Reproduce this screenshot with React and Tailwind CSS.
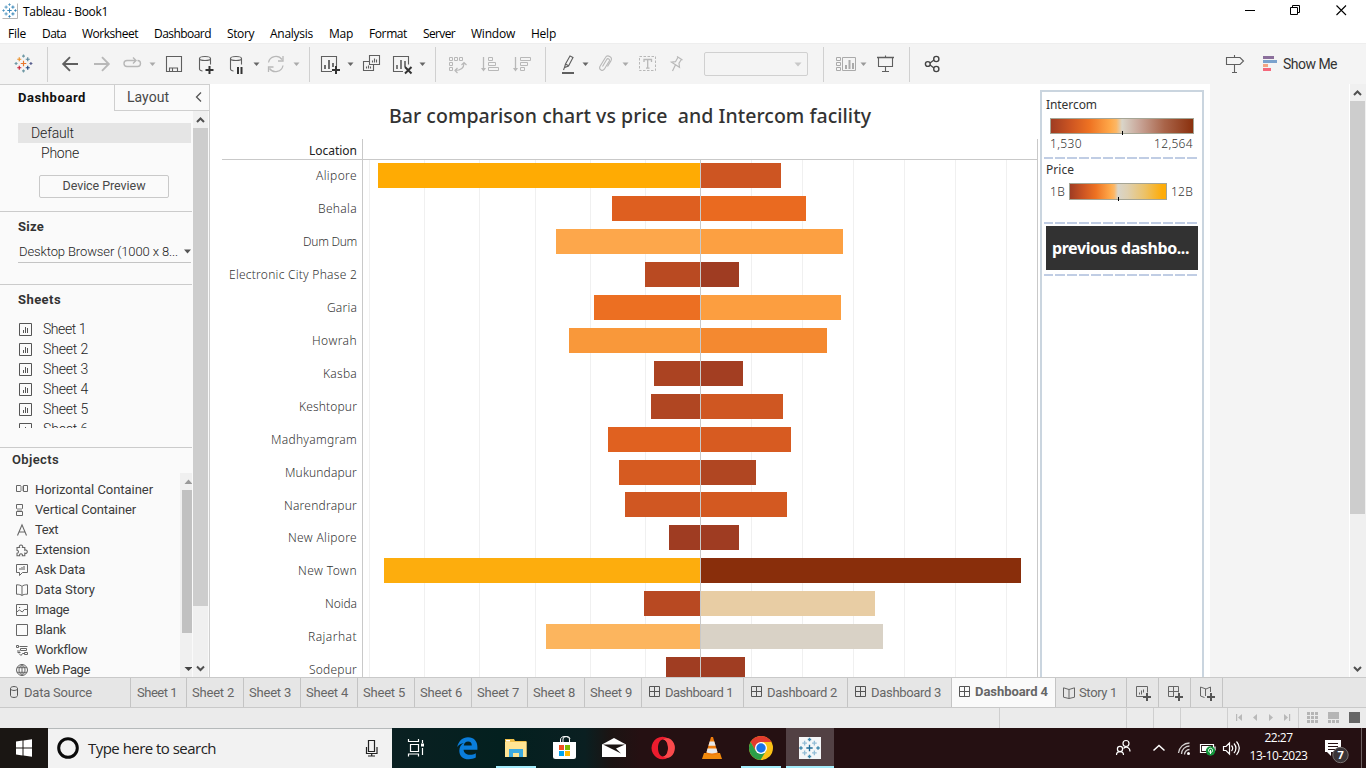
import { useLayoutEffect, useRef, useState } from "react";

/* Single line of text whose letter spacing is computed to fill a given width. */
function T({ w, className = "", children }) {
  const ref = useRef(null);
  const [ls, setLs] = useState(0);
  useLayoutEffect(() => {
    const natural = ref.current.getBoundingClientRect().width;
    setLs((w - natural) / children.length);
  }, [w, children]);
  return (
    <span className={"block shrink-0 whitespace-pre " + className} style={{ width: w }}>
      <span ref={ref} className="inline-block" style={{ letterSpacing: ls }}>{children}</span>
    </span>
  );
}

/* Drawing strip: its user space starts at (x, y) of the window. */
function G({ x, y = 43, w, h = 41, className = "", children }) {
  return (
    <svg width={w} height={h} viewBox={`${x} ${y} ${w} ${h}`} fill="none" className={"shrink-0 " + className}>
      {children}
    </svg>
  );
}

const Caret = ({ x, y = 64, c = "#666" }) => <path d={`M${x - 3} ${y - 1.5}h6l-3 3.5z`} fill={c} />;

function Plus({ x, y, r, c, sw = 1 }) {
  return <path d={`M${x - r} ${y}h${2 * r}M${x} ${y - r}v${2 * r}`} stroke={c} strokeWidth={sw} />;
}

function Crosses({ x, y, s = 1, colors }) {
  const pts = [
    [0, 0, 2.6], [0, -7, 1.4], [0, 7, 1.4], [-7, 0, 1.4], [7, 0, 1.4],
    [-4, -4, 1.9], [4, -4, 1.9], [-4, 4, 1.9], [4, 4, 1.9],
  ];
  return pts.map(([dx, dy, r], i) => (
    <Plus key={i} x={x + dx * s} y={y + dy * s} r={r * s} c={colors[i % colors.length]} sw={1.1 * s} />
  ));
}

const menus = [
  ["File", 18], ["Data", 24], ["Worksheet", 56], ["Dashboard", 57], ["Story", 27], ["Analysis", 43],
  ["Map", 24], ["Format", 38], ["Server", 32], ["Window", 44], ["Help", 25],
];

function TitleBar() {
  return (
    <div className="flex h-[23px] shrink-0 bg-white text-[12px] leading-[23px] text-black">
      <G x={0} y={0} w={23} h={23}>
        <path d="M2.5 18.500h15v-15" stroke="#b5b5b5" />
        <Crosses x={9.5} y={10.5} s={0.85} colors={["#2e7fb5", "#4d94c0"]} />
      </G>
      <T w={85}>Tableau - Book1</T>
      <div className="flex-1" />
      <G x={1230} y={0} w={136} h={23}>
        <path d="M1245 10.500h10" stroke="#000" />
        <path d="M1290.500 7.500h7v7h-7zM1292.500 7.500v-2h7v7h-2" stroke="#000" />
        <path d="M1336.500 5.500l9.500 9.500m0-9.500l-9.500 9.500" stroke="#000" strokeWidth="1.1" />
      </G>
    </div>
  );
}

const L = "#b8b8b8";
const D = "#5f5f5f";

function Toolbar() {
  return (
    <div className="flex h-[41px] shrink-0 border-t border-[#eeeeee] bg-[#f4f4f4] [&>svg]:-mt-px">
      <G x={0} w={48}>
        <Crosses x={23.5} y={63.5} s={1.06} colors={["#e8762d", "#7099a5", "#7099a5", "#7099a5", "#59608f", "#eb912b", "#59879b", "#c72035", "#1f457e"]} />
        <path d="M47.500 47v35" stroke="#d0d0d0" />
      </G>
      <G x={48} w={69}>
        <path d="M78 64H63.500M70 57.200L63.200 64l6.800 6.800" stroke={D} strokeWidth="1.9" />
        <path d="M94 64h14.500M102 57.200l6.800 6.800-6.800 6.800" stroke={L} strokeWidth="1.9" />
      </G>
      <G x={117} w={43}>
        <path d="M135.500 60.500h-8.500a3 3 0 0 0 0 6h10.500a3 3 0 0 0 0-6M133 57.500l3 3-3 3" stroke={L} strokeWidth="1.4" />
        <Caret x={152.500} c="#aaa" />
      </G>
      <G x={160} w={30}>
        <path d="M166.500 56.500h15v15h-15zM169.500 71v-3h8v3M172.500 71v-2.500" stroke={D} strokeWidth="1.1" />
      </G>
      <G x={190} w={73}>
        {[0, 31].map((d) => (
          <path key={d} d={`M${199.500 + d} 58.500v10.500c0 1 1.500 2 3 2M${210.500 + d} 58.500v6M${199.500 + d} 58.500a5.500 2 0 1 0 11 0a5.500 2 0 1 0 -11 0`} stroke={D} strokeWidth="1.1" />
        ))}
        <Plus x={209.500} y={70} r={4} c="#333" sw={2} />
        <path d="M238 67v7M241.500 67v7" stroke="#333" strokeWidth="2" />
        <Caret x={256.500} />
      </G>
      <G x={263} w={47}>
        <path d="M268.500 62.500a7.500 7.500 0 0 1 13.500-3M283 65.500a7.500 7.500 0 0 1-13.500 3M283 56v5h-5M268.500 72v-5h5" stroke={L} strokeWidth="1.3" />
        <Caret x={296.500} c="#aaa" />
        <path d="M309.500 47v35" stroke="#d0d0d0" />
      </G>
      <G x={310} w={48}>
        <path d="M332 71.500h-10.500v-15h15v9.500" stroke={D} strokeWidth="1.1" />
        <path d="M325 69v-4M329 69v-9M333 67v-4" stroke={D} strokeWidth="1.8" />
        <Plus x={336} y={70} r={4} c="#333" sw={2} />
        <Caret x={350.500} />
      </G>
      <G x={358} w={30}>
        <path d="M369.500 55.500h10v9h-10zM369 61.500h-5.500v9h10v-5.500M372.500 62.500v-2M374.500 62.500v-4M376.500 62.500v-3M366.500 68.500v-2M368.500 68.500v-3M370.500 68.500v-2" stroke={D} strokeWidth="1.1" />
      </G>
      <G x={388} w={48}>
        <path d="M403 71.500h-9.500v-15h15v8" stroke={D} strokeWidth="1.1" />
        <path d="M397 69v-4M401 69v-9M405 67v-6" stroke={D} strokeWidth="1.6" />
        <path d="M405 67l6.500 6.500m0-6.500l-6.500 6.500" stroke="#333" strokeWidth="2" />
        <Caret x={422.500} />
        <path d="M435.500 47v35" stroke="#d0d0d0" />
      </G>
      <G x={436} w={37}>
        <path d="M449.500 57.500h3v3h-3zM454.500 57.500h3v3h-3zM459.500 57.500h3v3h-3zM449.500 62.500h3v3h-3zM449.500 67.500h3v3h-3z" stroke={L} />
        <path d="M455 70.500c5 0 9-2 9-7.500M461.500 65l2.500-2.500 2.500 2.500M457.500 68l-2.500 2.500 2.500 2.500" stroke={L} strokeWidth="1.2" />
      </G>
      <G x={473} w={32}>
        <path d="M483.500 57v13" stroke={L} strokeWidth="1.3" />
        <path d="M481 68h5l-2.500 3.500z" fill={L} />
        <path d="M488.500 57.500h4v3h-4zM488.500 62.500h7v3h-7zM488.500 67.500h10v3h-10z" stroke={L} />
      </G>
      <G x={505} w={41}>
        <path d="M515.500 57v13" stroke={L} strokeWidth="1.3" />
        <path d="M513 68h5l-2.500 3.500z" fill={L} />
        <path d="M520.500 57.500h10v3h-10zM520.500 62.500h7v3h-7zM520.500 67.500h4v3h-4z" stroke={L} />
        <path d="M545.500 47v35" stroke="#d0d0d0" />
      </G>
      <G x={546} w={47}>
        <path d="M562 73h12" stroke={D} strokeWidth="2" />
        <path d="M564.500 67.500l1-3.500 4.500-8 3 1.500-4.500 8.500zM563.500 70l1-2.500M565.500 64l3 1.800" stroke={D} strokeWidth="1.1" />
        <Caret x={585.500} />
      </G>
      <G x={593} w={41}>
        <path d="M602.500 66.500l4.200-7a1.500 1.500 0 0 1 2.600 1.500l-5 8.200a2.600 2.600 0 0 1-4.500-2.500l5.500-9a3.200 3.200 0 0 1 5.600 3.200l-3.400 5.600" stroke={L} strokeWidth="1.1" />
        <Caret x={625.500} c="#aaa" />
      </G>
      <G x={634} w={29}>
        <path d="M639.500 56.500h16v14h-16z" stroke={L} strokeDasharray="2.5 1.500" />
        <path d="M644 62v-2.500h7.500V62M647.700 59.500v8.500M646 68.200h3.500" stroke={L} strokeWidth="1.3" />
      </G>
      <G x={663} w={41}>
        <path d="M677 56.500l5.500 3.500M678 57.200l-2.500 4.500-4 .5 8 5 -.5-4 2.500-4M675.500 64.800l-3 6.200" stroke={L} strokeWidth="1.2" />
      </G>
      <div className="mt-[8px] flex h-[24px] w-[104px] shrink-0 items-center justify-end rounded-[2px] border border-[#d0d0d0] pr-[5px]">
        <svg width="8" height="5"><path d="M0.500 0.500h7L4 4.500z" fill="#c8c8c8" /></svg>
      </div>
      <G x={808} w={64}>
        <path d="M823.500 47v35" stroke="#d0d0d0" />
        <path d="M836.500 57.500h4v3h-4zM836.500 62.500h4v3h-4zM836.500 67.500h4v3h-4zM842.500 57.500h13v13h-13z" stroke="#aaa" />
        <path d="M846 69v-4M849.500 69v-9M853 69v-6" stroke="#aaa" strokeWidth="2" />
        <Caret x={863.500} c="#999" />
      </G>
      <G x={872} w={38}>
        <path d="M877 57.500h17" stroke={D} strokeWidth="1.500" />
        <path d="M878.500 58v8.500h14V58M885.500 55.500v2M885.500 66.500v5M882 71.500h7" stroke={D} strokeWidth="1.1" />
        <path d="M909.500 47v35" stroke="#d0d0d0" />
      </G>
      <G x={910} w={310}>
        <path d="M930 63l4-3M930 65l4 3" stroke="#444" strokeWidth="1.2" />
        <g stroke="#444" strokeWidth="1.400">
          <circle cx="927.800" cy="64" r="2.400" /><circle cx="936.300" cy="59" r="2.600" /><circle cx="936.300" cy="69" r="2.600" />
        </g>
      </G>
      <G x={1220} w={63}>
        <path d="M1226.500 57.500h13.500l3.500 3.500-3.500 3.500h-13.500zM1234.500 55v2.500M1234.500 64.500v7.500M1232 72.500h5" stroke={D} strokeWidth="1.1" />
        <path d="M1263 56h11v3h-11z" fill="#8b6f9b" />
        <path d="M1263 60h14v3h-14z" fill="#7ba2cd" />
        <path d="M1263 64h5v3h-5z" fill="#f3a583" />
        <path d="M1263 68h8v3h-8z" fill="#f5687b" />
      </G>
      <T w={54} className="font-[Roboto,sans-serif] text-[14px] leading-[40px] text-[#333]">Show Me</T>
    </div>
  );
}

function SheetIcon() {
  return (
    <svg width="13" height="13" fill="none" className="shrink-0">
      <path d="M.5.5h12v12H.5zM4.500 10V7M6.500 10V4M8.500 10V5" stroke="#555" />
    </svg>
  );
}

const S = "#666";
const objects = [
  ["Horizontal Container", 118, <><path d="M.5 1.500h4v6h-4zM7.500 1.500h4v6h-4z" stroke={S} /><path d="M4 2h3v5H4z" fill="#bbb" /></>],
  ["Vertical Container", 101, <><path d="M.5.5h6v4h-6zM.5 7.500h6v4h-6z" stroke={S} /><path d="M1 4h5v3H1z" fill="#bbb" /></>],
  ["Text", 23, <path d="M1.500 11.500L6 .8l4.500 10.700M3 8h6" stroke={S} strokeWidth="1.1" />],
  ["Extension", 55, <path d="M1 3.500h2.500a1.700 1.700 0 1 1 3 0h2.300v2.700a1.700 1.700 0 1 1 0 3v2.600H6.400a1.500 1.500 0 1 0-2.800 0H1V9.200a1.500 1.500 0 1 0 0-3z" stroke={S} strokeWidth="1.1" />],
  ["Ask Data", 50, <><path d="M.5.5h11v8H6.500l-3 3v-3h-3z" stroke={S} /><path d="M3 4h2v2H3zM5 3h2v3H5zM7 2h2v4H7z" fill="#aaa" /></>],
  ["Data Story", 60, <path d="M6 2.500C5 1.200 3 .8.5.8v9.400c2.500 0 4.500.3 5.500 1.300 1-1 3-1.300 5.500-1.300V.8C9 .8 7 1.200 6 2.500zv9" stroke={S} />],
  ["Image", 34, <path d="M.5.5h11v11H.5zM.8 8l2.500-2 3 2 2-2.500h3M3 3.500h1.200" stroke={S} />],
  ["Blank", 31, <path d="M.5.5h11v11H.5z" stroke={S} />],
  ["Workflow", 52, <path d="M.5 1.500h2v2h-2zM3.500 2.500h8M4.500 4.500h6v2h-6zM1 7h3M4.500 8.500H1.500M8.500 8.500h3v2h-3zM3 9.500l2 2 1.500-2H8" stroke={S} />],
  ["Web Page", 55, <><circle cx="6" cy="6" r="5.500" stroke={S} /><path d="M6 .5c-4 3-4 8 0 11M6 .5c4 3 4 8 0 11M1 3.700h10M1 8.300h10M6 .5v11" stroke={S} /></>],
];

function Sidebar() {
  return (
    <div className="flex w-[210px] shrink-0 flex-col border-r border-t border-[#cfcfcf] bg-[#fafafa] font-[Roboto,sans-serif] text-[#484848]">
      <div className="flex h-[26px] shrink-0">
        <div className="w-[114px] pl-[18px] text-[13px] font-bold leading-[25px] text-[#111]"><T w={68}>Dashboard</T></div>
        <div className="flex flex-1 border-b border-l border-[#cfcfcf] pl-[12px] text-[14px] leading-[25px]">
          <T w={42}>Layout</T>
          <svg width="38" height="24" fill="none"><path d="M32 7.500l-4.500 4.500 4.500 4.500" stroke="#555" strokeWidth="1.300" /></svg>
        </div>
      </div>
      <div className="flex min-h-0 flex-1">
        <div className="flex w-[192px] shrink-0 flex-col overflow-hidden">
          <div className="ml-[18px] mr-px mt-[12px] h-[20px] shrink-0 bg-[#e5e5e5] pl-[13px] text-[14px] font-light leading-[21px] text-[#222]"><T w={43}>Default</T></div>
          <div className="h-[20px] shrink-0 pl-[41px] text-[14px] font-light leading-[21px] text-[#222]"><T w={38}>Phone</T></div>
          <div className="ml-[39px] mt-[12px] flex h-[23px] w-[130px] shrink-0 justify-center rounded-[2px] border border-[#c9c9c9] text-[12.500px] leading-[20px]"><T w={83}>Device Preview</T></div>
          <div className="mt-[13px] h-[74px] shrink-0 border-y border-[#cbcbcb] pl-[18px] pr-px">
            <T w={26} className="mt-[4px] text-[13px] font-bold leading-[22px] text-[#333]">Size</T>
            <div className="mt-[3px] flex h-[22px] items-center justify-between border-b border-[#c4c4c4] pl-px text-[13px] font-light leading-[20px] text-[#222]">
              <T w={159}>Desktop Browser (1000 x 8...</T>
              <svg width="7" height="5"><path d="M0 .5h7l-3.500 4z" fill="#555" /></svg>
            </div>
          </div>
          <div className="h-[162px] shrink-0 pl-[18px]">
            <T w={43} className="mt-[4px] text-[13px] font-bold leading-[22px] text-[#333]">Sheets</T>
            <div className="mt-[8px] h-[109px] overflow-hidden text-[14px] font-light leading-[20px] text-[#222]">
              {["Sheet 1", "Sheet 2", "Sheet 3", "Sheet 4", "Sheet 5", "Sheet 6"].map((s) => (
                <div key={s} className="flex h-[20px] items-center gap-[11px] pl-px"><SheetIcon /><T w={s === "Sheet 1" ? 43 : 45}>{s}</T></div>
              ))}
            </div>
          </div>
          <div className="flex min-h-0 flex-1 flex-col border-t border-[#cbcbcb]">
            <T w={47} className="ml-[12px] text-[13px] font-semibold leading-[23px] text-[#333]">Objects</T>
            <div className="mt-[2px] flex min-h-0 flex-1">
              <div className="flex-1 overflow-hidden pl-[16px] pt-[7px] text-[13px] leading-[20px] text-[#3c3c3c]">
                {objects.map(([name, w, icon]) => (
                  <div key={name} className="flex h-[20px] items-center gap-[7px]">
                    <svg width="12" height="12" fill="none" className="shrink-0 overflow-visible">{icon}</svg>
                    <T w={w}>{name}</T>
                  </div>
                ))}
              </div>
              <G x={180} y={473} w={12} h={204} className="bg-[#f0f0f0]">
                <path d="M184.500 484h8l-4-4.500z" fill="#999" />
                <path d="M182 490h10v143h-10z" fill="#c1c1c1" />
                <path d="M184.500 667h8l-4 4z" fill="#444" />
              </G>
            </div>
          </div>
        </div>
        <G x={192} y={111} w={17} h={566}>
          <path d="M193 111h15v566h-15z" fill="#f0f0f0" />
          <path d="M193 128h15v478h-15z" fill="#cdcdcd" />
          <path d="M197 122l3.500-3.500L204 122M197 666.500l3.500 3.500 3.500-3.500" stroke="#505050" strokeWidth="2" />
        </G>
      </div>
    </div>
  );
}

const rows = [
  ["Alipore", 41, 378, 781, "#ffab03", "#cd5522"],
  ["Behala", 39, 612, 806, "#de5f20", "#ea6a20"],
  ["Dum Dum", 54, 556, 843, "#fda74b", "#fca042"],
  ["Electronic City Phase 2", 128, 645, 739, "#b94a22", "#9f3c22"],
  ["Garia", 30, 594, 841, "#ec6f22", "#fc9e40"],
  ["Howrah", 45, 569, 827, "#f9983a", "#f48930"],
  ["Kasba", 34, 654, 743, "#ab4322", "#a33e22"],
  ["Keshtopur", 58, 651, 783, "#b04622", "#cf5722"],
  ["Madhyamgram", 86, 608, 791, "#e06120", "#d75b21"],
  ["Mukundapur", 72, 619, 756, "#d65b21", "#b04622"],
  ["Narendrapur", 73, 625, 787, "#d05722", "#d35921"],
  ["New Alipore", 69, 669, 739, "#9f3c22", "#9f3c22"],
  ["New Town", 59, 384, 1021, "#fdad0d", "#892e0b"],
  ["Noida", 32, 644, 875, "#b84922", "#e8cda4"],
  ["Rajarhat", 49, 546, 883, "#fcb55e", "#d9d2c6"],
  ["Sodepur", 48, 666, 745, "#a03d22", "#a03d22"],
];
const grid = [369, 424, 479, 535, 590, 645, 751, 802, 853, 904, 955, 1006];

function Chart() {
  return (
    <div className="flex w-[830px] shrink-0 flex-col overflow-hidden bg-white pl-[12px] font-['Noto_Sans',sans-serif]">
      <T w={482} className="ml-[167px] mt-[16px] text-[19.500px] font-medium leading-[31px] text-[#333]">Bar comparison chart vs price  and Intercom facility</T>
      <div className="mt-[8px] flex h-[21px] w-[816px] shrink-0 border-b border-r border-[#c9c9c9]">
        <div className="flex w-[141px] justify-end border-r border-[#c9c9c9] pr-[5px] text-[12px] leading-[23px] text-[#222]"><T w={48}>Location</T></div>
      </div>
      <div className="flex h-[517px] shrink-0 overflow-hidden">
        <div className="w-[140px] shrink-0 text-[12px] font-light leading-[31px] text-[#333]">
          {rows.map(([name, w], i) => (
            <div key={name} className={"flex justify-end pr-[5px] " + (i === 10 ? "h-[32px]" : "h-[33px]")}><T w={w}>{name}</T></div>
          ))}
        </div>
        <G x={362} y={160} w={676} h={517}>
          {grid.map((x) => <path key={x} d={`M${x + 0.5} 160v517`} stroke="#f0f0f0" />)}
          {rows.map(([name, , l, r, a, b], i) => {
            const y = 163 + i * 33 - (i > 9 ? 1 : 0);
            return (
              <g key={name}>
                <rect x={l} y={y} width={700 - l} height="25" fill={a} />
                <rect x={701} y={y} width={r - 701} height="25" fill={b} />
              </g>
            );
          })}
          <path d="M362.500 160v517M700.500 160v517M1037.500 160v517" stroke="#c9c9c9" />
        </G>
      </div>
    </div>
  );
}

const Dashes = () => (
  <svg width="154" height="2" className="ml-[2px] shrink-0"><path d="M-1 1h154" stroke="#c0cde4" strokeWidth="2" strokeDasharray="10 2" /></svg>
);

function Legends() {
  return (
    <div className="mt-[6px] flex w-[164px] shrink-0 flex-col border-x-2 border-t-2 border-[#cad5df] bg-white font-['Noto_Sans',sans-serif] text-[12px] leading-[18px] text-[#333]">
      <T w={51} className="ml-[4px] mt-[4px]">Intercom</T>
      <div className="ml-[8px] mt-[4px] flex h-[16px] w-[144px] shrink-0 items-end justify-center border border-[#a5a595] bg-[linear-gradient(90deg,#9f3c22_0%,#cd5522_14%,#ee7222_27%,#ffa94a_42%,#fcb765_46%,#d9d5c9_50%,#c9a699_62%,#a96449_80%,#8a300d_100%)]">
        <div className="-mb-[2px] h-[4px] w-px bg-black" />
      </div>
      <div className="ml-[8px] mt-px flex w-[143px] justify-between font-light"><T w={32}>1,530</T><T w={39}>12,564</T></div>
      <div className="h-[4px] shrink-0" />
      <Dashes />
      <T w={28} className="ml-[4px] mt-[2px]">Price</T>
      <div className="ml-[8px] mt-[4px] flex h-[17px] w-[143px] shrink-0 items-center justify-between font-light">
        <T w={15}>1B</T>
        <div className="flex h-[17px] w-[98px] items-end justify-center border border-[#a5a595] bg-[linear-gradient(90deg,#9f3c22_0%,#cd5522_14%,#ee7222_27%,#ffa94a_42%,#fcb765_46%,#d9d5c9_50%,#dfd0b0_60%,#ecc267_78%,#feac08_96%)]">
          <div className="-mb-[2px] h-[4px] w-px bg-black" />
        </div>
        <T w={22}>12B</T>
      </div>
      <div className="h-[22px] shrink-0" />
      <Dashes />
      <div className="ml-[4px] mt-[2px] h-[44px] w-[152px] shrink-0 bg-[#323232] pl-[6px] text-[16px] font-bold leading-[45px] text-white"><T w={137}>previous dashbo...</T></div>
      <div className="h-[4px] shrink-0" />
      <Dashes />
    </div>
  );
}

const Pane = () => <svg width="11" height="11" fill="none" className="mb-[2px] shrink-0"><path d="M.5.5h10v10H.5zM5.500.5v10M.5 5.500h10" stroke="#555" /></svg>;
const Book = () => <svg width="12" height="12" fill="none" className="shrink-0"><path d="M6 2.500L.5.8v9.400L6 11.500l5.500-1.300V.8zv9" stroke="#666" /></svg>;

function Tabs() {
  return (
    <div className="flex h-[31px] shrink-0 border-y border-[#c9c9c9] bg-[#e6e6e6] font-[Roboto,sans-serif] text-[13px] leading-[30px] text-[#666]">
      <div className="flex w-[131px] shrink-0 items-center gap-[5px] border-r border-[#c4c4c4] pl-[10px]">
        <svg width="9" height="12" fill="none" className="mb-[2px] shrink-0"><path d="M.5 2.500v7c0 2.600 7 2.600 7 0v-7M.5 2.500c0 2.600 7 2.600 7 0s-7-2.600-7 0" stroke="#555" /></svg>
        <T w={68}>Data Source</T>
      </div>
      <div className="w-[56px] shrink-0 border-r border-[#c4c4c4] pl-[6px]"><T w={40}>Sheet 1</T></div>
      {[2, 3, 4, 5, 6].map((n) => (
        <div key={n} className="w-[57px] shrink-0 border-r border-[#c4c4c4] pl-[5px]"><T w={42}>{`Sheet ${n}`}</T></div>
      ))}
      <div className="w-[56px] shrink-0 border-r border-[#c4c4c4] pl-[5px]"><T w={42}>Sheet 7</T></div>
      {[8, 9].map((n) => (
        <div key={n} className="w-[57px] shrink-0 border-r border-[#c4c4c4] pl-[5px]"><T w={42}>{`Sheet ${n}`}</T></div>
      ))}
      <div className="flex w-[102px] shrink-0 items-center gap-[5px] border-r border-[#c4c4c4] pl-[7px]"><Pane /><T w={68}>Dashboard 1</T></div>
      <div className="flex w-[104px] shrink-0 items-center gap-[5px] border-r border-[#c4c4c4] pl-[7px]"><Pane /><T w={70}>Dashboard 2</T></div>
      <div className="flex w-[104px] shrink-0 items-center gap-[5px] border-r border-[#c4c4c4] pl-[7px]"><Pane /><T w={70}>Dashboard 3</T></div>
      <div className="flex w-[104px] shrink-0 items-center gap-[5px] border-r border-[#c4c4c4] bg-[#fafafa] pl-[7px] font-bold leading-[27px]"><Pane /><T w={73} className="mb-[2px]">Dashboard 4</T></div>
      <div className="flex w-[71px] shrink-0 items-center gap-[4px] border-r border-[#c4c4c4] pl-[7px]"><Book /><T w={38}>Story 1</T></div>
      <G x={1127} y={678} w={96} h={29}>
        <path d="M1158.500 678v29M1190.500 678v29M1222.500 678v29" stroke="#c4c4c4" />
        <path d="M1143 696.500h-6.500v-10h11v6M1139.500 694.500v-2M1141.500 694.500v-4M1143.500 692.500v-3M1168.500 686.500h10v6M1173.500 686.500v10M1168.500 691.500h10M1174 696.500h-5.500v-10M1206 689l-5.500-2v9l4 1.500M1206 689l4.500-2v5M1205.500 689v7" stroke={S} />
        {[1147, 1179, 1211].map((x) => <Plus key={x} x={x} y={697} r={4} c="#555" sw={2} />)}
      </G>
    </div>
  );
}

function Status() {
  return (
    <div className="flex h-[20px] shrink-0 justify-end bg-[#ebebeb]">
      <G x={990} y={708} w={376} h={20}>
        <path d="M999.500 708v20M1126.500 708v20M1153.500 708v20M1180.500 708v20M1227.500 708v20M1298.500 708v20" stroke="#cfcfcf" />
        <path d="M1236 714h1.200v7h-1.200zM1242 714v7l-4-3.500zM1257 714v7l-4-3.500zM1269 714v7l4-3.500zM1284 714v7l4-3.500zM1289 714h1.200v7h-1.200z" fill="#b9b9b9" />
        {[1307, 1311, 1315].map((x) => [712, 716, 720].map((y) => <path key={x + "-" + y} d={`M${x} ${y}h3v3h-3z`} fill="#b5b5b5" />))}
        <path d="M1328 712h11v7h-11zM1328 720h3v3h-3zM1332 720h3v3h-3zM1336 720h3v3h-3z" fill="#b5b5b5" />
        <path d="M1349 712h11v11h-11z" fill="#666" />
      </G>
    </div>
  );
}

function Taskbar() {
  const t = { y: 728, h: 40 };
  return (
    <div className="flex h-[40px] shrink-0 bg-[linear-gradient(90deg,#1a1613_0px,#1a1613_380px,#0a2022_392px,#03201f_500px,#0a1f21_585px,#1b1413_610px,#251012_640px,#251012_1366px)] text-white">
      <G x={0} w={48} {...t}>
        <path d="M16 741.500l6.500-.9v6.900H16zM23.500 740.400l8.500-1.200v8.300h-8.500zM16 748.500h6.500v6.900l-6.500-.9zM23.500 748.500h8.500v8.300l-8.500-1.200z" fill="#fff" />
      </G>
      <div className="flex w-[344px] shrink-0 border-t border-[#b5b9ba] bg-[#f2f2f2]">
        <G x={48} y={729} w={40} h={39}>
          <circle cx="68" cy="748" r="9.300" stroke="#0a0a0a" strokeWidth="3" />
        </G>
        <T w={128} className="text-[15px] leading-[38px] text-[#222]">Type here to search</T>
        <G x={216} y={729} w={176} h={39}>
          <path d="M368.500 740.500h6v11h-6zM366.500 747v6.500h10.500V747M371.700 754v2.500M368 756h7" stroke="#222" strokeWidth="1.200" />
        </G>
      </div>
      <G x={392} w={52} {...t}>
        <path d="M408.500 739v2.500h10V739M410.500 744.500h8v7h-8zM408.500 756.500V754h10v2.500M422.500 740v3M422.500 748v7" stroke="#fff" strokeWidth="1.200" />
        <path d="M421 743.500h3v3h-3z" fill="#fff" />
      </G>
      <G x={444} w={50} {...t}>
        <path d="M457.200 747c1.500-6 5.300-9.700 10.800-9.700 6 0 9.400 4.200 9.400 9.700v2.800h-13.800c.2 3.500 3 5 6.200 5 2.300 0 4.400-.6 6-1.600v4.400c-2 1.100-4.500 1.700-7 1.700-6 0-9.500-3.500-9.500-8.600 0-3.400 1.800-6.200 4.500-7.600-2.400.4-5.100 1.700-6.600 3.900zm6.600-1.500h8c0-2.500-1.300-4-3.700-4-2.300 0-3.900 1.500-4.300 4z" fill="#0a7ddb" fillRule="evenodd" />
      </G>
      <G x={494} w={50} {...t}>
        <path d="M505 739h9l1 2h11.500v16H505z" fill="#f0c04a" />
        <path d="M505 742h21.500v15H505z" fill="#ffe594" />
        <path d="M509 749h14v8h-4v-4h-6v4h-4z" fill="#3cabe0" />
        <path d="M506 740h4v1.500h-4z" fill="#fff" />
        <path d="M496 766h40v2h-40z" fill="#a3ecfb" />
      </G>
      <G x={544} w={46} {...t}>
        <path d="M560.500 742v-2a4.500 3.500 0 0 1 9 0v2M563 742v-3a3.500 2.500 0 0 1 7 0" stroke="#fff" />
        <path d="M553 742h23v14.500a2.500 2.500 0 0 1-2.500 2.500h-18a2.500 2.500 0 0 1-2.500-2.500z" fill="#fff" />
        <path d="M559 745h5v5h-5z" fill="#f25022" /><path d="M565 745h5v5h-5z" fill="#7fba00" />
        <path d="M559 751h5v5h-5z" fill="#00a4ef" /><path d="M565 751h5v5h-5z" fill="#ffb900" />
      </G>
      <G x={590} w={48} {...t}>
        <path d="M602 744.500l12-6.500 12 6.500V757h-24z" fill="#fff" />
        <path d="M603 744.500h22l-9 4 5 5z" fill="#1b1413" />
      </G>
      <G x={638} w={50} {...t}>
        <path d="M662.500 736.800a11 11.200 0 1 0 .01 0zM663 739.500c3 0 5 3.800 5 8.500s-2 8.500-5 8.500-5-3.800-5-8.500 2-8.500 5-8.500z" fill="#ec1c2e" fillRule="evenodd" />
        <path d="M663 739.500c3 0 5 3.800 5 8.500s-2 8.500-5 8.500c3 2 6 1.500 8 0a11.200 11.200 0 0 0 0-17c-2-1.500-5-2-8 0z" fill="#f94a4c" />
      </G>
      <G x={688} w={50} {...t}>
        <path d="M704 753h16l2 6h-20z" fill="#f28a0c" />
        <path d="M711 737h2l5 17c-2 1.500-10 1.500-12 0z" fill="#ef7c0e" />
        <path d="M709.700 741.500h4.600l1.300 4.300h-7.200zM707.500 748.500h9l1 3.800c-2 1.500-9 1.500-11 0z" fill="#e7e9ea" />
      </G>
      <G x={738} w={48} {...t}>
        <circle cx="761" cy="748" r="12" fill="#fbc116" />
        <path d="M750.600 742a12 12 0 0 1 20.800 0H761l-5.200 9z" fill="#e33b2e" />
        <path d="M750.600 742a12 12 0 0 0 9.900 18l5.500-9h-10.200z" fill="#2c9f48" />
        <circle cx="761" cy="748" r="6" fill="#fff" /><circle cx="761" cy="748" r="4.700" fill="#1a73e8" />
        <path d="M741 766h40v2h-40z" fill="#a3ecfb" />
      </G>
      <G x={786} w={48} {...t} className="bg-[#524144]">
        <path d="M799 737h22v22h-22z" fill="#f4f6f8" />
        <Crosses x={809.500} y={748} s={1.220} colors={["#1f6b96", "#3d87ac", "#3d87ac", "#3d87ac", "#3d87ac", "#93bdd6", "#93bdd6", "#93bdd6", "#93bdd6"]} />
        <path d="M786 766h48v2h-48z" fill="#a3ecfb" />
      </G>
      <div className="flex-1" />
      <G x={1106} w={143} {...t}>
        <g stroke="#fff" strokeWidth="1.200">
          <circle cx="1126" cy="743.500" r="3" /><circle cx="1120" cy="749" r="2.600" />
          <path d="M1116.500 755c0-4.500 7-4.500 7 0M1123.500 748.500c2.500-2.500 6.500-1 6.500 3" />
          <path d="M1153.500 750.500l5.500-5 5.500 5" strokeWidth="1.500" />
          <path d="M1178.500 753a11 11 0 0 1 11-10M1181.500 754a8 8 0 0 1 8-8M1184.500 754.500a5 5 0 0 1 5-5" strokeWidth="1.300" opacity=".8" />
          <path d="M1200.500 744.500h13v8h-13zM1215 746.500v4" />
          <path d="M1223.500 746.500h2.500l3.500-3.500v11l-3.500-3.500h-2.500zM1231.500 745.500c1.300 1.500 1.300 4 0 5.500M1234 743.500c2.500 3 2.500 6.500 0 9.500M1236.500 741.500c3.500 4 3.500 9 0 13.500" />
        </g>
        <path d="M1202 746h9v5h-9z" fill="#fff" /><circle cx="1188.500" cy="753.500" r="1.500" fill="#fff" />
        <circle cx="1210.500" cy="751" r="4.700" fill="#12953b" />
        <path d="M1210.500 754v-4M1208.500 750.500c0-3 4-3 4 0s-4 2-4 0" stroke="#fff" />
      </G>
      <div className="flex w-[59px] shrink-0 flex-col items-center pt-px text-[12px] leading-[18px]">
        <T w={28}>22:27</T>
        <T w={58}>13-10-2023</T>
      </div>
      <G x={1308} w={58} {...t}>
        <path d="M1325 740h16v12h-10v4l-4-4h-2z" fill="#fff" />
        <path d="M1328 743.500h10M1328 746.500h10M1328 749.500h7" stroke="#251012" />
        <circle cx="1340.500" cy="755" r="7.700" fill="#3a3437" stroke="#77706f" />
        <text x="1337.600" y="759" fill="#fff" fontSize="11" fontWeight="700">7</text>
        <path d="M1361.500 728v40" stroke="#6d6061" />
      </G>
    </div>
  );
}

export default function App() {
  return (
    <div className="flex h-[768px] w-[1366px] flex-col overflow-hidden bg-white font-['Open_Sans',sans-serif]">
      <TitleBar />
      <div className="flex h-[20px] shrink-0 gap-[16px] bg-white pl-[8px] text-[12px] leading-[21px] text-black">
        {menus.map(([m, w]) => <T key={m} w={w}>{m}</T>)}
      </div>
      <Toolbar />
      <div className="flex h-[593px] shrink-0 overflow-hidden">
        <Sidebar />
        <Chart />
        <Legends />
        <div className="w-[6px] shrink-0 bg-white" />
        <div className="w-[139px] shrink-0 bg-[#f4f4f4]" />
        <G x={1349} y={84} w={17} h={593} className="bg-[#f0f0f0]">
          <path d="M1349 84h1v593h-1z" fill="#fff" />
          <path d="M1350 101h15v413h-15z" fill="#cdcdcd" />
          <path d="M1354 95l3.500-3.500L1361 95M1354 667l3.500 3.500 3.500-3.500" stroke="#505050" strokeWidth="2" />
        </G>
      </div>
      <Tabs />
      <Status />
      <Taskbar />
    </div>
  );
}
